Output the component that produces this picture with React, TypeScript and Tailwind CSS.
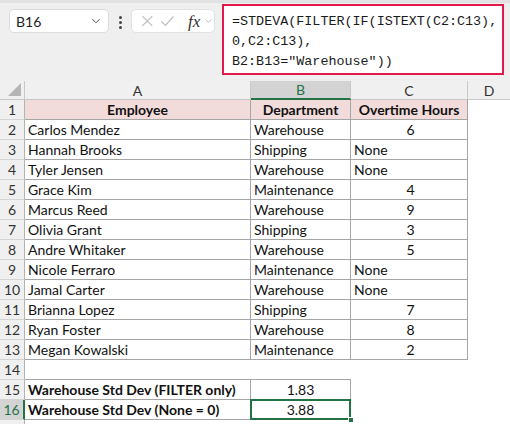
import { ChevronDown } from "lucide-react";

type Row = {
  a?: string;
  b?: string;
  c?: string;
  cCenter?: boolean;
};

const data: Row[] = [
  { a: "Carlos Mendez", b: "Warehouse", c: "6", cCenter: true },
  { a: "Hannah Brooks", b: "Shipping", c: "None" },
  { a: "Tyler Jensen", b: "Warehouse", c: "None" },
  { a: "Grace Kim", b: "Maintenance", c: "4", cCenter: true },
  { a: "Marcus Reed", b: "Warehouse", c: "9", cCenter: true },
  { a: "Olivia Grant", b: "Shipping", c: "3", cCenter: true },
  { a: "Andre Whitaker", b: "Warehouse", c: "5", cCenter: true },
  { a: "Nicole Ferraro", b: "Maintenance", c: "None" },
  { a: "Jamal Carter", b: "Warehouse", c: "None" },
  { a: "Brianna Lopez", b: "Shipping", c: "7", cCenter: true },
  { a: "Ryan Foster", b: "Warehouse", c: "8", cCenter: true },
  { a: "Megan Kowalski", b: "Maintenance", c: "2", cCenter: true },
];

function RowHead({ n, active }: { n?: number; active?: boolean }) {
  return (
    <div
      className={
        "w-[25px] h-[20px] shrink-0 flex items-center justify-center border-b border-[#d4d4d4] text-[14px] " +
        (active
          ? "bg-[#d3d3d3] text-[#217346] border-r-2 border-r-[#217346]"
          : "bg-[#f0f0f0] text-[#333] border-r border-r-[#b3b3b3]")
      }
    >
      {n}
    </div>
  );
}

export default function App() {
  return (
    <div
      className="w-[510px] h-[424px] overflow-hidden bg-white text-[#111]"
      style={{ fontFamily: "Lato, 'Open Sans', sans-serif" }}
    >
      {/* Name box + formula bar */}
      <div className="h-[81px] bg-[#efefef] border-t-[3px] border-[#e2e2e2] flex items-start">
        <div className="ml-[9px] mt-[6px] w-[100px] h-[24px] bg-white border border-[#dcdcdc] rounded-[5px] flex items-center justify-between pl-[6px] pr-[5px]">
          <span className="text-[14px] text-[#222]">B16</span>
          <ChevronDown size={14} strokeWidth={1.6} className="text-[#444]" />
        </div>
        <div className="w-[22px] mt-[13px] flex flex-col items-center gap-[2px]">
          <span className="w-[3px] h-[3px] rounded-full bg-[#444]" />
          <span className="w-[3px] h-[3px] rounded-full bg-[#444]" />
          <span className="w-[3px] h-[3px] rounded-full bg-[#444]" />
        </div>
        <div className="mt-[6px] w-[84px] h-[24px] bg-white border border-[#e2e2e2] rounded-[5px] flex items-center pl-[9px] gap-[6px]">
          <svg width="14" height="14" viewBox="0 0 14 14">
            <path d="M1.5 1.5 L12.5 12.5 M12.5 1.5 L1.5 12.5" stroke="#bdbdbd" strokeWidth="1.3" fill="none" />
          </svg>
          <svg width="16" height="14" viewBox="0 0 16 14">
            <path d="M1.5 7.5 L6 12 L15 2" stroke="#bdbdbd" strokeWidth="1.3" fill="none" />
          </svg>
          <span
            className="ml-[8px] text-[17px] italic leading-none text-[#333]"
            style={{ fontFamily: "'Liberation Serif', serif" }}
          >
            fx
          </span>
          <ChevronDown size={12} strokeWidth={1.4} className="-ml-[3px] text-[#999]" />
        </div>
        <div
          className="ml-[7px] mt-[1px] w-[282px] h-[71px] bg-white border-2 border-[#e2194a] pl-[8px] pt-[6px] text-[13.4px] leading-[20px] text-[#1a1a1a]"
          style={{ fontFamily: "'Liberation Mono', monospace" }}
        >
          <div>=STDEVA(FILTER(IF(ISTEXT(C2:C13),</div>
          <div>0,C2:C13),</div>
          <div>B2:B13="Warehouse"))</div>
        </div>
      </div>

      {/* Column letters */}
      <div className="flex h-[19px] bg-[#f0f0f0] text-[14px] text-[#333]">
        <div className="w-[25px] shrink-0 border-r border-b border-[#c8c8c8] relative">
          <svg className="absolute right-[3px] bottom-[3px]" width="13" height="13" viewBox="0 0 13 13">
            <polygon points="13,0 13,13 0,13" fill="#b5b5b5" />
          </svg>
        </div>
        <div className="w-[226px] shrink-0 border-r border-b border-[#c8c8c8] flex items-center justify-center">A</div>
        <div className="w-[100px] shrink-0 border-r border-[#c8c8c8] border-b-2 border-b-[#217346] bg-[#d3d3d3] text-[#217346] flex items-center justify-center">
          B
        </div>
        <div className="w-[117px] shrink-0 border-r border-b border-[#c8c8c8] flex items-center justify-center">C</div>
        <div className="flex-1 border-b border-[#c8c8c8] flex items-center justify-center">D</div>
      </div>

      {/* Header row */}
      <div className="flex text-[14px]">
        <RowHead n={1} />
        <div className="w-[226px] h-[20px] shrink-0 bg-[#f2dcdb] border-r border-b border-[#a6a6a6] font-bold flex items-center justify-center">
          Employee
        </div>
        <div className="w-[100px] h-[20px] shrink-0 bg-[#f2dcdb] border-r border-b border-[#a6a6a6] font-bold flex items-center justify-center">
          Department
        </div>
        <div className="w-[117px] h-[20px] shrink-0 bg-[#f2dcdb] border-r border-b border-[#a6a6a6] font-bold flex items-center justify-center">
          Overtime Hours
        </div>
      </div>

      {data.map((r, i) => (
        <div key={i} className="flex text-[14px]">
          <RowHead n={i + 2} />
          <div className="w-[226px] h-[20px] shrink-0 border-r border-b border-[#a6a6a6] flex items-center pl-[3px]">
            {r.a}
          </div>
          <div className="w-[100px] h-[20px] shrink-0 border-r border-b border-[#a6a6a6] flex items-center pl-[3px]">
            {r.b}
          </div>
          <div
            className={
              "w-[117px] h-[20px] shrink-0 border-r border-b border-[#a6a6a6] flex items-center pl-[3px] " +
              (r.cCenter ? "justify-center" : "")
            }
          >
            {r.c}
          </div>
        </div>
      ))}

      {/* Row 14 is left blank */}
      <div className="flex">
        <RowHead n={14} />
        <div className="w-[326px] h-[20px] shrink-0 border-b border-[#a6a6a6]" />
      </div>

      <div className="flex text-[14px]">
        <RowHead n={15} />
        <div className="w-[226px] h-[20px] shrink-0 border-r border-b border-[#a6a6a6] font-bold flex items-center pl-[3px]">
          Warehouse Std Dev (FILTER only)
        </div>
        <div className="w-[100px] h-[20px] shrink-0 border-r border-b border-[#a6a6a6] flex items-center justify-center">
          1.83
        </div>
      </div>

      <div className="flex text-[14px]">
        <RowHead n={16} active />
        <div className="w-[226px] h-[20px] shrink-0 border-r border-b border-[#a6a6a6] font-bold flex items-center pl-[3px]">
          Warehouse Std Dev (None = 0)
        </div>
        <div className="relative w-[100px] h-[20px] shrink-0 border-r border-b border-[#a6a6a6] flex items-center justify-center">
          3.88
          {/* active cell outline with fill handle */}
          <div className="absolute -left-[1px] -top-[1px] -right-[1px] -bottom-[1px] border-2 border-[#217346]" />
          <div className="absolute -right-[4px] -bottom-[4px] w-[6px] h-[6px] bg-[#217346] border border-white" />
        </div>
      </div>

      <div className="flex">
        <RowHead />
      </div>
    </div>
  );
}
